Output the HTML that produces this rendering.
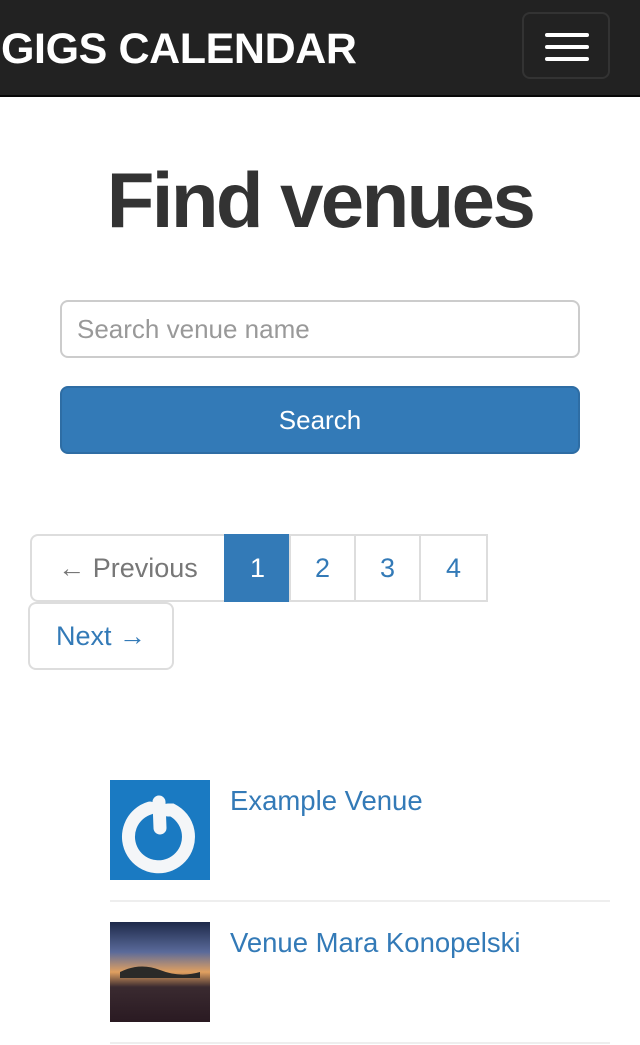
<!DOCTYPE html>
<html><head><meta charset="utf-8"><style>
*{box-sizing:border-box;margin:0;padding:0}
body{width:640px;height:1045px;background:#fff;font-family:"Liberation Sans",sans-serif;position:relative;overflow:hidden;color:#333}
.nav{position:absolute;left:0;top:0;width:640px;height:97px;background:#222;border-bottom:2px solid #080808}
.brand{position:absolute;left:1px;top:24px;color:#fff;font-weight:bold;font-size:43px;letter-spacing:-0.4px;line-height:50px}
.tog{position:absolute;left:522px;top:12px;width:88px;height:67px;border:2px solid #333;border-radius:8px}
.tog i{position:absolute;left:21px;width:44px;height:4px;background:#fff;border-radius:2px}
h1{position:absolute;left:0;width:640px;top:155px;text-align:center;font-size:78px;font-weight:bold;letter-spacing:-2.6px;line-height:90px;color:#333}
.inp{position:absolute;left:60px;top:300px;width:520px;height:58px;border:2px solid #ccc;border-radius:8px;font-size:26px;color:#999;padding:12px 15px}
.btn{position:absolute;left:60px;top:386px;width:520px;height:68px;background:#337ab7;border:2px solid #2e6da4;border-radius:8px;color:#fff;font-size:26px;text-align:center;line-height:64px}
.pg{position:absolute;height:68px;border:2px solid #ddd;font-size:27px;color:#337ab7;text-align:center;line-height:64px}
.item{position:absolute;left:110px;width:500px;border-bottom:2px solid #eee}
.item a{position:absolute;left:120px;top:5px;color:#337ab7;font-size:27.5px}
</style></head><body>
<div class="nav"><div class="brand">GIGS CALENDAR</div><div class="tog"><i style="top:19px"></i><i style="top:31px"></i><i style="top:43px"></i></div></div>
<h1>Find venues</h1>
<div class="inp">Search venue name</div>
<div class="btn">Search</div>
<div class="pg" style="left:30px;top:534px;width:196px;color:#777;border-radius:8px 0 0 8px">← Previous</div>
<div class="pg" style="left:224px;top:534px;width:67px;background:#337ab7;border-color:#337ab7;color:#fff">1</div>
<div class="pg" style="left:289px;top:534px;width:67px">2</div>
<div class="pg" style="left:354px;top:534px;width:67px">3</div>
<div class="pg" style="left:419px;top:534px;width:69px">4</div>
<div class="pg" style="left:28px;top:602px;width:146px;border-radius:8px">Next →</div>
<div class="item" style="top:780px;height:122px">
<svg width="100" height="100" style="position:absolute;left:0;top:0"><rect width="100" height="100" fill="#1a7ac2"/><path d="M40 28 A30 30 0 1 0 62 30 L58 30" fill="none" stroke="#f4f6f8" stroke-width="13" stroke-linecap="round"/><path d="M49 22 L50 48" stroke="#f4f6f8" stroke-width="13" stroke-linecap="round"/></svg>
<a>Example Venue</a></div>
<div class="item" style="top:922px;height:122px">
<svg width="100" height="100" style="position:absolute;left:0;top:0"><defs><linearGradient id="g" x1="0" y1="0" x2="0" y2="1"><stop offset="0" stop-color="#1e2a4a"/><stop offset=".3" stop-color="#5a6a9a"/><stop offset=".5" stop-color="#e0a060"/><stop offset=".65" stop-color="#3a2a30"/><stop offset="1" stop-color="#2a1a22"/></linearGradient></defs><rect width="100" height="100" fill="url(#g)"/><path d="M10 50 Q30 40 50 48 T90 50 L90 56 L10 56Z" fill="#2a2a28"/></svg>
<a>Venue Mara Konopelski</a></div>
</body></html>
